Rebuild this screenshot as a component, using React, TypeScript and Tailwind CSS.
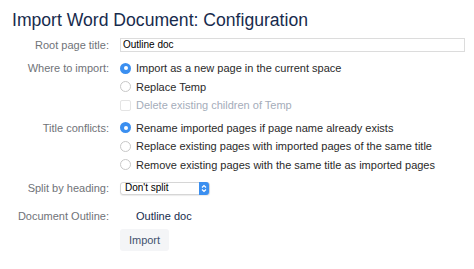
const font = { fontFamily: '"Liberation Sans", Arial, sans-serif' };

function Radio({ checked }: { checked?: boolean }) {
  if (checked) {
    return (
      <span className="flex h-[11px] w-[11px] shrink-0 items-center justify-center rounded-full bg-[#3b8ff0]">
        <span className="h-[4px] w-[4px] rounded-full bg-white" />
      </span>
    );
  }
  return <span className="h-[11px] w-[11px] shrink-0 rounded-full border border-[#c8c8c8] bg-white" />;
}

function Option({ checked, children }: { checked?: boolean; children: React.ReactNode }) {
  return (
    <div className="flex h-[18.5px] items-center gap-[5px] text-[#2a2a2a]">
      <Radio checked={checked} />
      <span>{children}</span>
    </div>
  );
}

function Row({ label, children, className = '' }: { label: string; children: React.ReactNode; className?: string }) {
  return (
    <div className={`flex ${className}`}>
      <div className="w-[110px] shrink-0 pr-px text-right text-[#707378]">{label}</div>
      <div className="ml-[10px] flex-1">{children}</div>
    </div>
  );
}

export default function App() {
  return (
    <div className="h-[269px] w-[474px] overflow-hidden bg-white text-[11px] leading-[18px]" style={font}>
      <h1 className="pl-[12px] pt-[9px] text-[17.6px] leading-[22px] text-[#172b4d]">
        Import Word Document: Configuration
      </h1>

      <Row label="Root page title:" className="mt-[5px] items-center">
        <div className="mr-[9px] flex h-[14px] items-center border border-[#dcdcdc] px-[2px] text-[10px] text-black">
          Outline doc
        </div>
      </Row>

      <Row label="Where to import:" className="mt-[5px]">
        <Option checked>Import as a new page in the current space</Option>
        <Option>Replace Temp</Option>
        <div className="flex h-[18.5px] items-center gap-[5px] text-[#a5adba]">
          <span className="h-[11px] w-[11px] shrink-0 rounded-[2px] border border-[#e4e4e4] bg-white" />
          <span>Delete existing children of Temp</span>
        </div>
      </Row>

      <Row label="Title conflicts:" className="mt-[4px]">
        <Option checked>Rename imported pages if page name already exists</Option>
        <Option>Replace existing pages with imported pages of the same title</Option>
        <Option>Remove existing pages with the same title as imported pages</Option>
      </Row>

      <Row label="Split by heading:" className="mt-[5px] items-center">
        <div className="flex h-[13px] w-[90px] items-center justify-between rounded-[3px] border border-[#d6d6d6] bg-white pl-[4px] text-[10px] text-black shadow-[0_1px_1px_rgba(0,0,0,0.08)]">
          <span>Don't split</span>
          <span className="flex h-[13px] w-[10px] items-center justify-center rounded-r-[3px] bg-[#3b8ff0]">
            <svg width="6" height="9" viewBox="0 0 6 9" fill="none" stroke="white" strokeWidth="1.2">
              <path d="M1 3.5 L3 1.5 L5 3.5" />
              <path d="M1 5.5 L3 7.5 L5 5.5" />
            </svg>
          </span>
        </div>
      </Row>

      <Row label="Document Outline:" className="mt-[10px] items-center">
        <div className="pl-[16px] text-[#172b4d]">Outline doc</div>
      </Row>

      <div className="ml-[120px] mt-[4px] flex h-[22px] w-[49px] items-center justify-center rounded-[3px] bg-[#f4f5f7] text-[#42526e]">
        Import
      </div>
    </div>
  );
}
